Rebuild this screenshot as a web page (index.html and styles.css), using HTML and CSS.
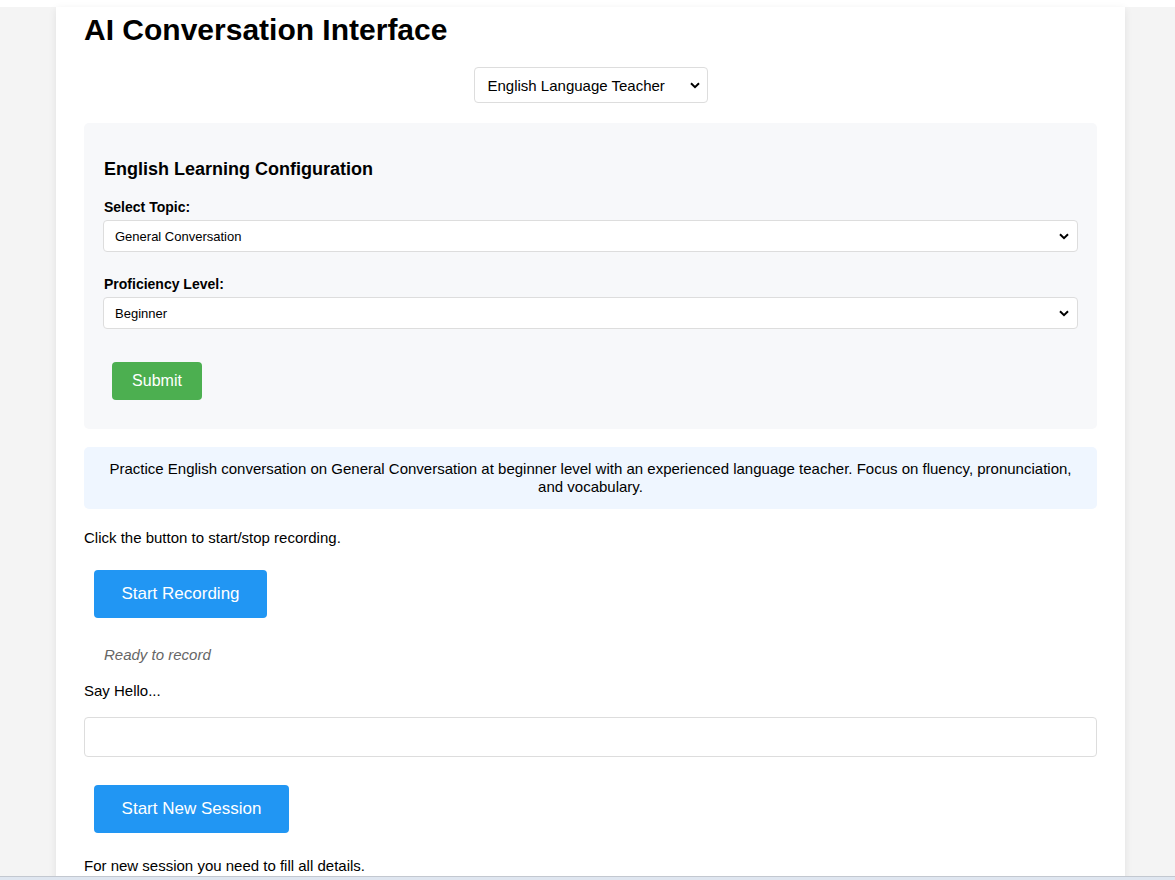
FILE: index.html
```html
<!DOCTYPE html>
<html lang="en">
<head>
<meta charset="utf-8">
<title>AI Conversation Interface</title>
<link rel="stylesheet" href="styles.css">
</head>
<body>
<div class="page">
  <main class="container">
    <h1 class="title">AI Conversation Interface</h1>
    <div class="role-row">
      <select class="role-select">
        <option>English Language Teacher</option>
      </select>
    </div>
    <section class="config">
      <h3 class="config-title">English Learning Configuration</h3>
      <label class="field-label">Select Topic:</label>
      <select class="field-select">
        <option>General Conversation</option>
      </select>
      <label class="field-label second">Proficiency Level:</label>
      <select class="field-select">
        <option>Beginner</option>
      </select>
      <button class="btn-submit">Submit</button>
    </section>
    <div class="info">Practice English conversation on General Conversation at beginner level with an experienced language teacher. Focus on fluency, pronunciation, and vocabulary.</div>
    <p class="hint">Click the button to start/stop recording.</p>
    <button class="btn-blue rec">Start Recording</button>
    <p class="status">Ready to record</p>
    <p class="say">Say Hello...</p>
    <input class="text-input" type="text">
    <button class="btn-blue session">Start New Session</button>
    <p class="note">For new session you need to fill all details.</p>
  </main>
</div>
<div class="bottom-bar"></div>
</body>
</html>
```

FILE: styles.css
```css
html, body {
  margin: 0;
  padding: 0;
  height: 100%;
  overflow: hidden;
}
body {
  background: #fff;
  font-family: "Liberation Sans", Arial, sans-serif;
  color: #000;
}
.page {
  margin-top: 7px;
  background: #f4f4f4;
  min-height: 873px;
  padding-left: 56px;
}
.container {
  width: 1069px;
  box-sizing: border-box;
  background: #fff;
  padding: 0 28px 40px;
  box-shadow: 0 2px 8px rgba(0,0,0,0.08);
  min-height: 873px;
}
.title {
  margin: 0;
  padding-top: 6px;
  font-size: 30px;
  line-height: 34px;
  font-weight: bold;
}
.role-row {
  display: flex;
  justify-content: center;
  margin-top: 20px;
}
.role-select,
.field-select {
  -webkit-appearance: none;
  appearance: none;
  background-color: #fff;
  background-image: url("data:image/svg+xml;utf8,<svg xmlns='http://www.w3.org/2000/svg' width='10' height='7' viewBox='0 0 10 7'><path d='M1 1.2 L5 5.2 L9 1.2' fill='none' stroke='black' stroke-width='2'/></svg>");
  background-repeat: no-repeat;
  border: 1px solid #ddd;
  border-radius: 4px;
  color: #000;
  font-family: "Liberation Sans", Arial, sans-serif;
}
.role-select {
  width: 234px;
  height: 36px;
  font-size: 15px;
  padding: 0 9px 0 13px;
  background-position: right 7px center;
}
.config {
  margin-top: 20px;
  background: #f7f8fa;
  border-radius: 5px;
  padding: 20px 19px 29px 19px;
  display: flex;
  flex-direction: column;
  align-items: stretch;
}
.config-title {
  margin: 15px 0 0;
  font-size: 18px;
  line-height: 22px;
  padding-left: 1px;
}
.field-label {
  margin-top: 19px;
  font-size: 14px;
  font-weight: bold;
  line-height: 16px;
  padding-left: 1px;
}
.field-label.second {
  margin-top: 24px;
}
.field-select {
  margin-top: 5px;
  height: 32px;
  font-size: 13px;
  padding: 0 8px 0 11px;
  background-position: right 8px center;
}
.btn-submit {
  align-self: flex-start;
  margin: 33px 0 0 9px;
  width: 90px;
  height: 38px;
  padding: 0;
  background: #4CAF50;
  color: #fff;
  border: none;
  border-radius: 4px;
  font-family: "Liberation Sans", Arial, sans-serif;
  font-size: 16px;
}
.info {
  margin-top: 18px;
  background: #eff6ff;
  border-radius: 5px;
  padding: 13px 20px;
  text-align: center;
  font-size: 15px;
  line-height: 18px;
}
.hint, .say, .note {
  font-size: 15px;
  line-height: 18px;
}
.hint {
  margin: 20px 0 0;
}
.btn-blue {
  display: block;
  margin-left: 10px;
  height: 48px;
  background: #2196F3;
  color: #fff;
  border: none;
  border-radius: 4px;
  font-family: "Liberation Sans", Arial, sans-serif;
  font-size: 17px;
  padding: 0;
  white-space: nowrap;
}
.rec {
  margin-top: 23px;
  width: 173px;
}
.status {
  margin: 28px 0 0 20px;
  font-style: italic;
  color: #666;
  font-size: 15px;
  line-height: 18px;
}
.say {
  margin: 18px 0 0;
}
.text-input {
  display: block;
  box-sizing: border-box;
  width: 100%;
  height: 40px;
  margin-top: 17px;
  border: 1px solid #ddd;
  border-radius: 4px;
  font-size: 15px;
}
.session {
  margin-top: 28px;
  width: 195px;
}
.note {
  margin: 24px 0 0;
}
.bottom-bar {
  position: fixed;
  left: 0;
  right: 0;
  bottom: 0;
  height: 3px;
  background: #dfe6f0;
  border-top: 1px solid #c3c8d0;
}
```
